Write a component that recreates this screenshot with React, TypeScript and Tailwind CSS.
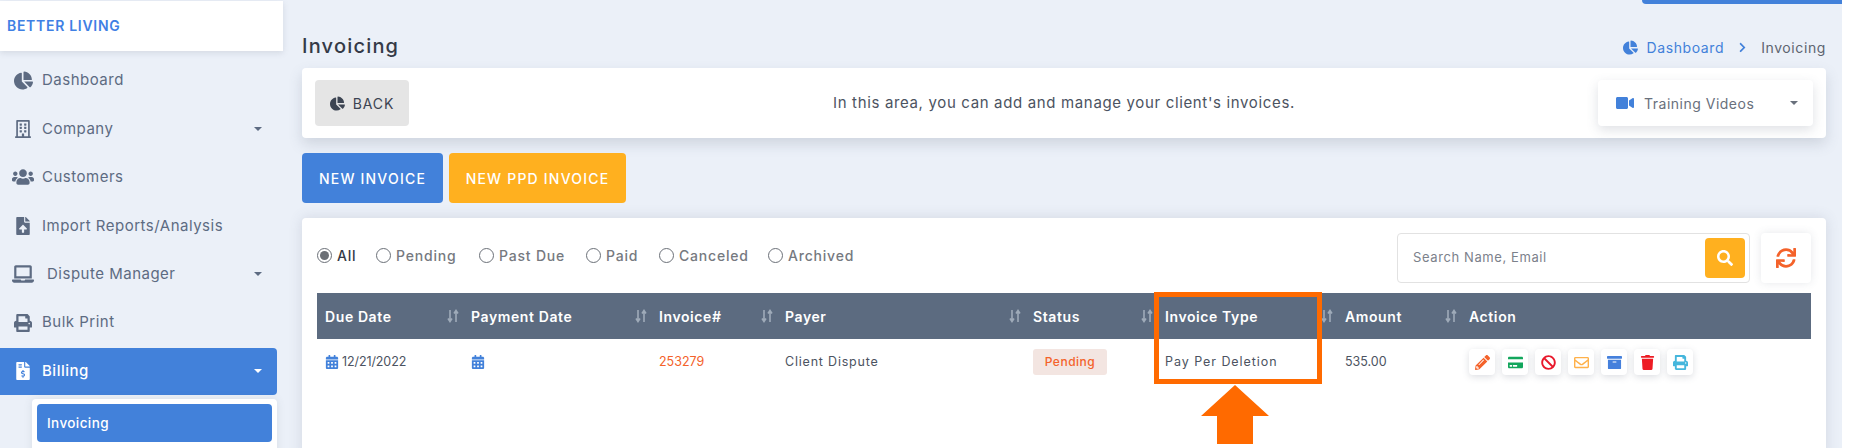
import React from 'react';
import {
  FaChartPie,
  FaRegBuilding,
  FaUsers,
  FaFileUpload,
  FaLaptop,
  FaPrint,
  FaFileInvoiceDollar,
  FaVideo,
  FaSearch,
  FaSync,
  FaCalendarAlt,
  FaPencilAlt,
  FaCreditCard,
  FaBan,
  FaRegEnvelope,
  FaArchive,
  FaTrash,
  FaChevronRight,
} from 'react-icons/fa';

const Caret: React.FC<{ className?: string }> = ({ className = '' }) => (
  <span className={`w-0 h-0 border-x-[4px] border-x-transparent border-t-[4px] ${className}`} />
);

const SortIcon = () => (
  <svg width="12" height="14" viewBox="0 0 12 14" fill="none" stroke="#9fabb9" strokeWidth="1.6">
    <path d="M3 1v11M1 9.5 3 12.5 5 9.5" />
    <path d="M9 13V2M7 4.5 9 1.5 11 4.5" />
  </svg>
);

const NavItem: React.FC<{
  icon: React.ReactNode;
  label: string;
  caret?: boolean;
  gap?: string;
}> = ({ icon, label, caret, gap = 'ml-[7px]' }) => (
  <div className="h-[48.4px] flex items-center pl-[11px] pr-[21px] text-[#5d6b82]">
    <span className="w-[24px] flex justify-center">{icon}</span>
    <span className={`${gap} text-[15px] tracking-[0.5px]`}>{label}</span>
    {caret && <Caret className="ml-auto border-t-[#5d6b82]" />}
  </div>
);

const columns = [
  { label: 'Due Date', width: 'w-[146px]' },
  { label: 'Payment Date', width: 'w-[188px]' },
  { label: 'Invoice#', width: 'w-[126px]' },
  { label: 'Payer', width: 'w-[248px]' },
  { label: 'Status', width: 'w-[132px]' },
  { label: 'Invoice Type', width: 'w-[180px]' },
  { label: 'Amount', width: 'w-[124px]' },
  { label: 'Action', width: 'w-[350px]', noSort: true },
];

const filters = [
  { label: 'All', active: true, width: 'w-[59px]' },
  { label: 'Pending', width: 'w-[103px]' },
  { label: 'Past Due', width: 'w-[107px]' },
  { label: 'Paid', width: 'w-[73px]' },
  { label: 'Canceled', width: 'w-[109px]' },
  { label: 'Archived', width: 'w-[100px]' },
];

const actions = [
  { icon: <FaPencilAlt />, color: 'text-[#f4622a]' },
  { icon: <FaCreditCard />, color: 'text-[#12a65c]' },
  { icon: <FaBan />, color: 'text-[#e8192c]' },
  { icon: <FaRegEnvelope />, color: 'text-[#ffb14a]' },
  { icon: <FaArchive />, color: 'text-[#4580dc]' },
  { icon: <FaTrash />, color: 'text-[#ed1c24]' },
  { icon: <FaPrint />, color: 'text-[#45b6dc]' },
];

export default function App() {
  return (
    <div className="relative w-[1862px] h-[448px] overflow-hidden bg-white font-['Inter','Liberation_Sans',sans-serif]">
      <div className="w-[1842px] h-full flex bg-[#ebf0f8]">
        {/* sidebar */}
        <aside className="w-[283px] shrink-0 pt-[1px]">
          <div className="h-[50px] bg-white flex items-center pl-[7px] pb-[1px] shadow-[0_2px_6px_rgba(80,90,110,0.15)] text-[#3f80e4] text-[14px] font-semibold tracking-[0.7px]">
            BETTER LIVING
          </div>
          <div className="pt-[5.5px]">
            <NavItem icon={<FaChartPie className="text-[19px]" />} label="Dashboard" />
            <NavItem icon={<FaRegBuilding className="text-[18px]" />} label="Company" caret />
            <NavItem icon={<FaUsers className="text-[22px]" />} label="Customers" />
            <NavItem icon={<FaFileUpload className="text-[18px]" />} label="Import Reports/Analysis" />
            <NavItem icon={<FaLaptop className="text-[22px]" />} label="Dispute Manager" caret gap="ml-[12px]" />
            <NavItem icon={<FaPrint className="text-[18px]" />} label="Bulk Print" />
          </div>
          <div className="w-[277px] h-[47px] mt-[1px] bg-[#4281da] rounded-r-[4px] flex items-center pl-[11px] pr-[15px] text-white">
            <span className="w-[24px] flex justify-center text-[18px]"><FaFileInvoiceDollar /></span>
            <span className="ml-[7px] text-[15px] font-medium tracking-[0.5px]">Billing</span>
            <Caret className="ml-auto border-t-white" />
          </div>
          <div className="ml-[32px] w-[245px] mt-[4px] bg-white rounded-t-[4px] p-[5px] h-[60px] shadow-[0_0_8px_rgba(80,90,110,0.12)]">
            <div className="h-[38px] rounded-[4px] bg-[#4281da] flex items-center pl-[10px] text-white text-[13.5px] font-medium tracking-[0.4px]">
              Invoicing
            </div>
          </div>
        </aside>

        {/* main */}
        <main className="relative w-[1559px] shrink-0">
          <div className="flex justify-end h-[4px]">
            <div className="w-[200px] h-[4px] bg-[#4281da] rounded-bl-[4px]" />
          </div>
          <div className="pl-[19px] pr-[16px] h-[64px] flex items-end pb-[9px] justify-between">
            <h1 className="text-[20px] font-medium text-[#343a47] leading-[26px] tracking-[1.2px]">Invoicing</h1>
            <div className="flex items-center text-[14px] tracking-[0.6px] pb-[1px]">
              <FaChartPie className="text-[#4281da] text-[15px]" />
              <span className="ml-[9px] text-[#4281da]">Dashboard</span>
              <FaChevronRight className="mx-[13px] text-[#4281da] text-[11px]" />
              <span className="text-[#5d6470]">Invoicing</span>
            </div>
          </div>

          <div className="ml-[19px] w-[1524px] h-[70px] bg-white rounded-[4px] grid grid-cols-[1fr_auto_1fr] items-center px-[13px] shadow-[0_6px_14px_rgba(80,90,110,0.18)]">
            <button className="w-[94px] h-[46px] rounded-[4px] bg-[#e5e5e5] flex items-center justify-center gap-[8px] text-[#3c4452] text-[14px] tracking-[0.9px]">
              <FaChartPie className="text-[15px]" />
              BACK
            </button>
            <p className="text-[15px] text-[#4c5361] tracking-[0.65px]">
              In this area, you can add and manage your client's invoices.
            </p>
            <div className="justify-self-end w-[215px] h-[46px] rounded-[4px] bg-white flex items-center pl-[18px] pr-[15px] shadow-[0_4px_12px_rgba(80,90,110,0.18)] text-[#69707c] text-[14px] tracking-[0.5px]">
              <FaVideo className="text-[#4281da] text-[18px]" />
              <span className="ml-[10px]">Training Videos</span>
              <Caret className="ml-auto border-t-[#69707c]" />
            </div>
          </div>

          <div className="ml-[19px] mt-[15px] flex gap-[6px]">
            <button className="w-[141px] h-[50px] rounded-[4px] bg-[#4281da] text-white text-[14px] font-medium tracking-[1.2px]">
              NEW INVOICE
            </button>
            <button className="w-[177px] h-[50px] rounded-[4px] bg-[#ffb01f] text-white text-[14px] font-medium tracking-[1.2px]">
              NEW PPD INVOICE
            </button>
          </div>

          <section className="ml-[19px] mt-[15px] w-[1524px] h-[240px] bg-white rounded-t-[4px] pt-[15px] pl-[15px] pr-[15px] shadow-[0_0_14px_rgba(80,90,110,0.16)]">
            <div className="flex items-center h-[50px]">
              <div className="flex items-center mb-[6px] text-[14px] tracking-[0.8px] font-medium text-[#76797f]">
                {filters.map((f) => (
                  <label key={f.label} className={`flex items-center gap-[5px] ${f.width} ${f.active ? 'text-[#343a47]' : ''}`}>
                    <span className="w-[15px] h-[15px] rounded-full border border-[#6b7078] flex items-center justify-center shrink-0">
                      {f.active && <span className="w-[9px] h-[9px] rounded-full bg-[#6b6f75]" />}
                    </span>
                    {f.label}
                  </label>
                ))}
              </div>
              <div className="ml-auto w-[353px] h-[50px] rounded-[4px] border border-[#e2e2e2] flex items-center pl-[15px] pr-[4px] text-[13px] text-[#7c818b] tracking-[0.6px]">
                Search Name, Email
                <span className="ml-auto w-[40px] h-[40px] rounded-[4px] bg-[#ffb01f] flex items-center justify-center text-white text-[16px]">
                  <FaSearch />
                </span>
              </div>
              <div className="ml-[11px] w-[50px] h-[50px] rounded-[4px] bg-white flex items-center justify-center text-[#f4622a] text-[20px] shadow-[0_0_8px_rgba(80,90,110,0.14)]">
                <FaSync />
              </div>
            </div>

            <div className="mt-[10px] w-[1494px]">
              <div className="flex h-[46px] bg-[#5c6b80] text-white text-[14px] font-semibold tracking-[0.6px]">
                {columns.map((c) => (
                  <div key={c.label} className={`${c.width} flex items-center pl-[8px] pr-[4px] justify-between`}>
                    {c.label}
                    {!c.noSort && <SortIcon />}
                  </div>
                ))}
              </div>
              <div className="flex h-[46px] items-center text-[12.5px] text-[#4c5361]">
                <div className="w-[146px] pl-[8px] flex items-center gap-[3px] tracking-[-0.1px]">
                  <FaCalendarAlt className="text-[#4281da] text-[14px]" />
                  12/21/2022
                </div>
                <div className="w-[188px] pl-[8px]">
                  <FaCalendarAlt className="text-[#4281da] text-[14px]" />
                </div>
                <div className="w-[126px] pl-[8px] text-[#f4622a]">253279</div>
                <div className="w-[248px] pl-[8px] tracking-[0.8px]">Client Dispute</div>
                <div className="w-[132px] pl-[8px]">
                  <span className="inline-flex items-center justify-center w-[74px] h-[26px] rounded-[3px] bg-[#f3e5e1] text-[#f4622a] text-[12px] font-medium tracking-[0.5px]">
                    Pending
                  </span>
                </div>
                <div className="w-[180px] pl-[8px] tracking-[0.95px]">Pay Per Deletion</div>
                <div className="w-[124px] pl-[8px]">535.00</div>
                <div className="w-[350px] pl-[8px] flex gap-[7px]">
                  {actions.map((a, i) => (
                    <span key={i} className={`w-[26px] h-[26px] rounded-[4px] bg-white flex items-center justify-center text-[15px] shadow-[0_2px_7px_rgba(80,90,110,0.2)] ${a.color}`}>
                      {a.icon}
                    </span>
                  ))}
                </div>
              </div>
            </div>
          </section>
        </main>
      </div>

      {/* annotation over the screenshot */}
      <div className="absolute left-[1154px] top-[292px] w-[168px] h-[92px] border-[5px] border-[#ff6a00]" />
      <svg className="absolute left-[1200px] top-[384px]" width="70" height="62" viewBox="0 0 70 62">
        <path d="M35 1 69 32H53V60H17V32H1Z" fill="#ff6a00" />
      </svg>
    </div>
  );
}
